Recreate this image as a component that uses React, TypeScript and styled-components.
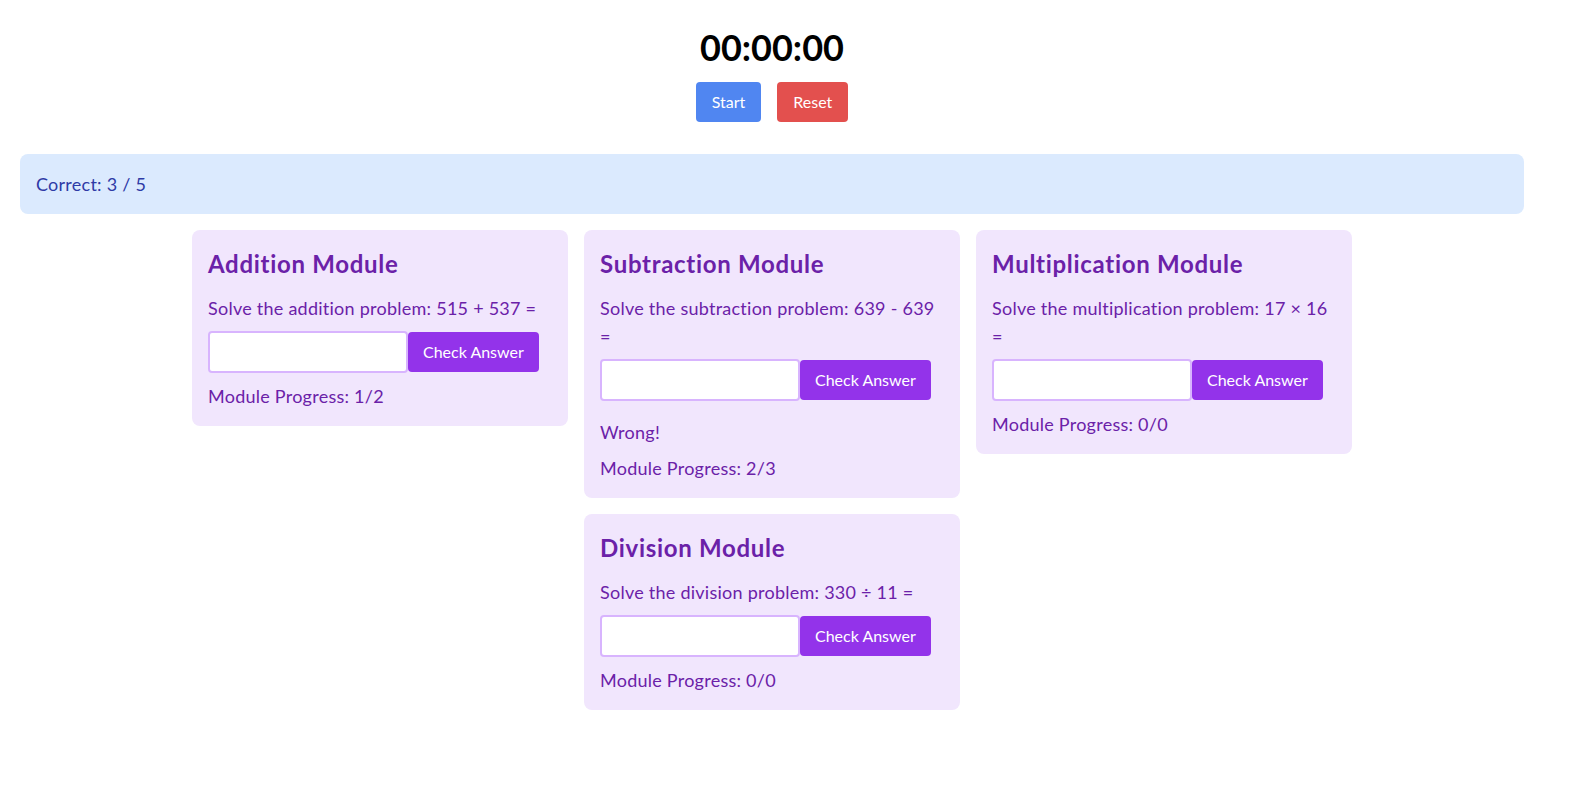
import React, { useState } from "react";
import styled, { createGlobalStyle } from "styled-components";

const GlobalStyle = createGlobalStyle`
  * { box-sizing: border-box; }
  body {
    margin: 0;
    background: #ffffff;
    font-family: Lato, "Noto Sans", "Liberation Sans", sans-serif;
  }
`;

const Page = styled.div`
  width: 1544px;
  padding: 27px 20px 20px;
`;

const TimerBlock = styled.div`
  display: flex;
  flex-direction: column;
  align-items: center;
  margin-bottom: 32px;
`;

const TimerText = styled.h1`
  margin: 0 0 15px;
  font-size: 36px;
  line-height: 40px;
  font-weight: 700;
  color: #000000;
`;

const ButtonRow = styled.div`
  display: flex;
  gap: 16px;
`;

const ControlButton = styled.button<{ $tone: "blue" | "red" }>`
  border: none;
  border-radius: 4px;
  padding: 8px 16px;
  font-family: inherit;
  font-size: 16px;
  line-height: 24px;
  color: #ffffff;
  background: ${(p) => (p.$tone === "blue" ? "#5086f1" : "#e3504e")};
  cursor: pointer;
`;

const ScoreBar = styled.div`
  background: #dbeafe;
  border-radius: 8px;
  padding: 16px;
  font-size: 18px;
  line-height: 28px;
  letter-spacing: 0.25px;
  color: #2e3aa6;
  margin-bottom: 16px;
`;

const ModuleGrid = styled.div`
  display: flex;
  flex-wrap: wrap;
  justify-content: center;
  align-items: flex-start;
  gap: 16px;
`;

const ModuleCard = styled.section`
  width: 376px;
  padding: 16px;
  background: #f1e6fd;
  border-radius: 8px;
  color: #6b21a8;
`;

const ModuleTitle = styled.h2`
  margin: 0 0 16px;
  padding-top: 2px;
  height: 32px;
  font-size: 24px;
  line-height: 32px;
  font-weight: 700;
  letter-spacing: 0.7px;
  color: #6b21a8;
`;

const Prompt = styled.p`
  margin: 0 0 8px;
  font-size: 18px;
  line-height: 28px;
  letter-spacing: 0.25px;
`;

const AnswerRow = styled.div`
  display: flex;
  align-items: center;
  padding: 1px 0;
`;

const AnswerInput = styled.input`
  width: 200px;
  height: 42px;
  border: 2px solid #d8b4fe;
  border-radius: 4px;
  background: #ffffff;
  padding: 4px 8px;
  font-family: inherit;
  font-size: 18px;
  outline: none;
`;

const CheckButton = styled.button`
  border: none;
  border-radius: 4px;
  padding: 8px 15px;
  background: #9333ea;
  color: #ffffff;
  font-family: inherit;
  font-size: 16px;
  line-height: 24px;
  cursor: pointer;
`;

const Note = styled.p<{ $gap: number }>`
  margin: ${(p) => p.$gap}px 0 0;
  font-size: 18px;
  line-height: 28px;
  letter-spacing: 0.25px;
`;

type ModuleData = {
  title: string;
  prompt: string;
  feedback?: string;
  progress: string;
};

const modules: ModuleData[] = [
  { title: "Addition Module", prompt: "Solve the addition problem: 515 + 537 =", progress: "1/2" },
  {
    title: "Subtraction Module",
    prompt: "Solve the subtraction problem: 639 - 639 =",
    feedback: "Wrong!",
    progress: "2/3",
  },
  { title: "Multiplication Module", prompt: "Solve the multiplication problem: 17 × 16 =", progress: "0/0" },
  { title: "Division Module", prompt: "Solve the division problem: 330 ÷ 11 =", progress: "0/0" },
];

function Module({ data }: { data: ModuleData }) {
  const [value, setValue] = useState("");
  return (
    <ModuleCard>
      <ModuleTitle>{data.title}</ModuleTitle>
      <Prompt>{data.prompt}</Prompt>
      <AnswerRow>
        <AnswerInput value={value} onChange={(e) => setValue(e.target.value)} />
        <CheckButton>Check Answer</CheckButton>
      </AnswerRow>
      {data.feedback && <Note $gap={16}>{data.feedback}</Note>}
      <Note $gap={8}>Module Progress: {data.progress}</Note>
    </ModuleCard>
  );
}

export default function App() {
  return (
    <>
      <GlobalStyle />
      <Page>
        <TimerBlock>
          <TimerText>00:00:00</TimerText>
          <ButtonRow>
            <ControlButton $tone="blue">Start</ControlButton>
            <ControlButton $tone="red">Reset</ControlButton>
          </ButtonRow>
        </TimerBlock>
        <ScoreBar>Correct: 3 / 5</ScoreBar>
        <ModuleGrid>
          {modules.map((m) => (
            <Module key={m.title} data={m} />
          ))}
        </ModuleGrid>
      </Page>
    </>
  );
}
